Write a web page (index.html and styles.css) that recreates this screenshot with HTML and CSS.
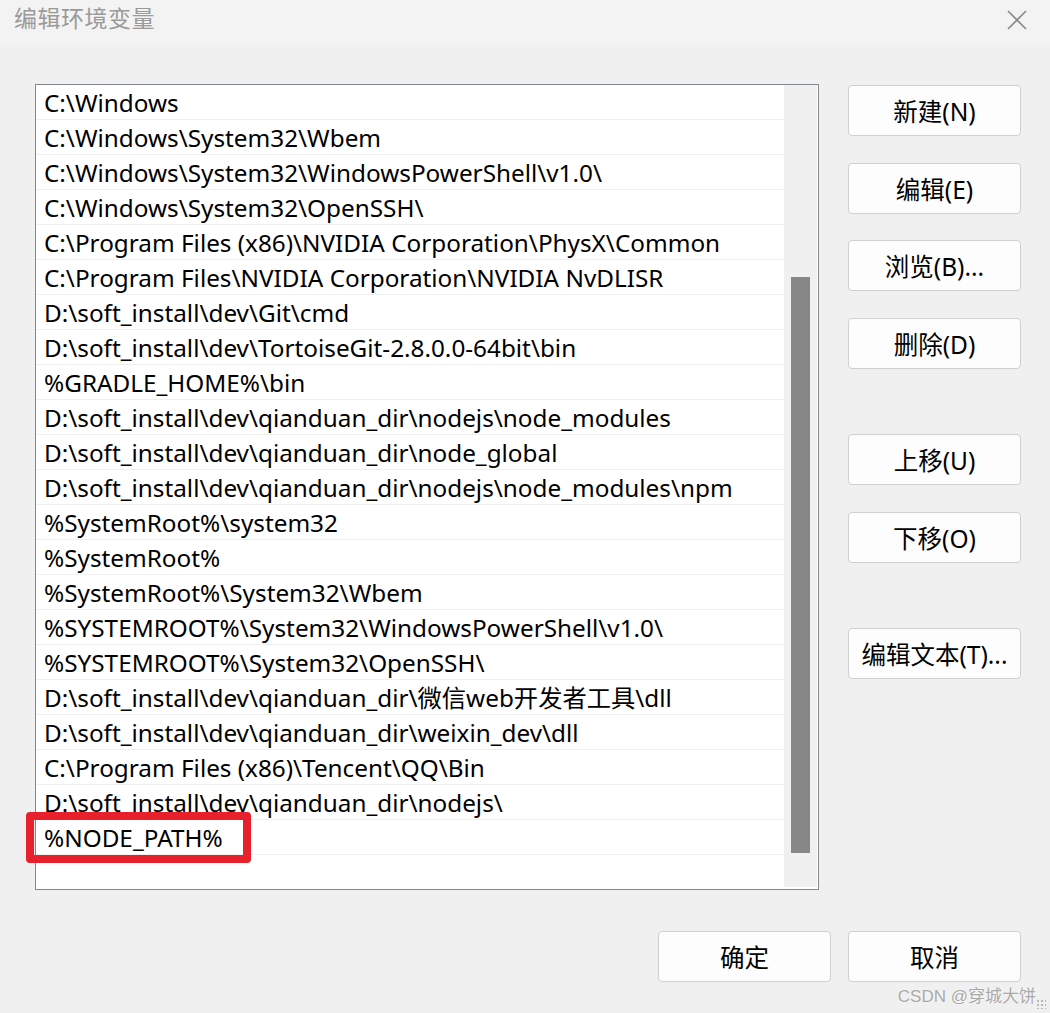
FILE: index.html
```html
<!DOCTYPE html>
<html lang="zh-CN">
<head>
    <meta charset="UTF-8">
    <title>编辑环境变量</title>
    <link rel="stylesheet" href="styles.css">
</head>
<body>
    <div class="dialog">
        <div class="title-bar">
            <span class="title">编辑环境变量</span>
            <svg class="close" width="20" height="20" viewBox="0 0 20 20">
                <path d="M1 1 L19 19 M19 1 L1 19" stroke="#8a8a8a" stroke-width="1.6" fill="none"/>
            </svg>
        </div>

        <div class="main">
            <div class="list-box">
                <div class="rows">
                    <div class="row">C:\Windows</div>
                    <div class="row">C:\Windows\System32\Wbem</div>
                    <div class="row">C:\Windows\System32\WindowsPowerShell\v1.0\</div>
                    <div class="row">C:\Windows\System32\OpenSSH\</div>
                    <div class="row">C:\Program Files (x86)\NVIDIA Corporation\PhysX\Common</div>
                    <div class="row">C:\Program Files\NVIDIA Corporation\NVIDIA NvDLISR</div>
                    <div class="row">D:\soft_install\dev\Git\cmd</div>
                    <div class="row">D:\soft_install\dev\TortoiseGit-2.8.0.0-64bit\bin</div>
                    <div class="row">%GRADLE_HOME%\bin</div>
                    <div class="row">D:\soft_install\dev\qianduan_dir\nodejs\node_modules</div>
                    <div class="row">D:\soft_install\dev\qianduan_dir\node_global</div>
                    <div class="row">D:\soft_install\dev\qianduan_dir\nodejs\node_modules\npm</div>
                    <div class="row">%SystemRoot%\system32</div>
                    <div class="row">%SystemRoot%</div>
                    <div class="row">%SystemRoot%\System32\Wbem</div>
                    <div class="row">%SYSTEMROOT%\System32\WindowsPowerShell\v1.0\</div>
                    <div class="row">%SYSTEMROOT%\System32\OpenSSH\</div>
                    <div class="row">D:\soft_install\dev\qianduan_dir\微信web开发者工具\dll</div>
                    <div class="row">D:\soft_install\dev\qianduan_dir\weixin_dev\dll</div>
                    <div class="row">C:\Program Files (x86)\Tencent\QQ\Bin</div>
                    <div class="row">D:\soft_install\dev\qianduan_dir\nodejs\</div>
                    <div class="row marked">%NODE_PATH%<span class="highlight"></span></div>
                </div>
                <div class="scrollbar">
                    <div class="thumb"></div>
                </div>
            </div>

            <div class="side">
                <div class="btn-group">
                    <button class="btn">新建(N)</button>
                    <button class="btn">编辑(E)</button>
                    <button class="btn">浏览(B)...</button>
                    <button class="btn">删除(D)</button>
                </div>
                <div class="btn-group">
                    <button class="btn">上移(U)</button>
                    <button class="btn">下移(O)</button>
                </div>
                <div class="btn-group">
                    <button class="btn">编辑文本(T)...</button>
                </div>
            </div>
        </div>

        <div class="footer">
            <button class="btn">确定</button>
            <button class="btn">取消</button>
        </div>

        <div class="watermark">CSDN @穿城大饼</div>
        <div class="grip"></div>
    </div>
</body>
</html>
```

FILE: styles.css
```css
/* Dialog frame */
body {
    margin: 0;
    padding: 0;
    background: #f0f0f0;
    font-family: 'Noto Sans', 'Noto Sans CJK SC', sans-serif;
}

.dialog {
    position: relative;
    width: 1050px;
    height: 1013px;
    background: #f0f0f0;
    overflow: hidden;
}

.title-bar {
    height: 45px;
    background: #f3f3f3;
    display: flex;
    align-items: center;
    justify-content: space-between;
    padding: 0 23px 11px 14px;
    box-sizing: border-box;
}

.title {
    font-family: 'Noto Sans CJK SC', sans-serif;
    font-size: 23px;
    color: #9a9a9a;
    letter-spacing: 0.5px;
}

.close {
    margin-top: 5px;
}

/* Main area */
.main {
    display: flex;
    padding: 39px 0 0 35px;
}

.list-box {
    width: 784px;
    height: 806px;
    box-sizing: border-box;
    border: 1px solid #838790;
    background: #fff;
    display: flex;
}

.rows {
    width: 748px;
}

.row {
    position: relative;
    height: 35px;
    line-height: 36px;
    padding-left: 8px;
    border-bottom: 1px solid #efefef;
    box-sizing: border-box;
    font-size: 24.3px;
    color: #000;
    white-space: nowrap;
}

.highlight {
    position: absolute;
    left: -10px;
    top: -8px;
    width: 209px;
    height: 35px;
    border: 8px solid #e8202c;
    border-radius: 4px;
}

.scrollbar {
    width: 33px;
    height: 802px;
    background: #f0f0f0;
    padding-top: 192px;
    box-sizing: border-box;
}

.thumb {
    width: 19px;
    height: 576px;
    margin-left: 7px;
    background: #878787;
}

/* Buttons */
.side {
    display: flex;
    flex-direction: column;
    gap: 65px;
    margin-left: 29px;
    margin-top: 1px;
}

.btn-group {
    display: flex;
    flex-direction: column;
    gap: 26.7px;
}

.btn {
    width: 173px;
    height: 51px;
    background: #fdfdfd;
    border: 1px solid #d0d0d0;
    border-radius: 4px;
    font-family: 'Noto Sans', 'Noto Sans CJK SC', sans-serif;
    font-size: 24.5px;
    color: #000;
    padding: 0;
}

.footer {
    display: flex;
    justify-content: flex-end;
    gap: 17px;
    padding: 41px 29px 0 0;
}

/* Watermark */
.watermark {
    position: absolute;
    right: 14px;
    bottom: 6px;
    font-family: 'Liberation Sans', 'Noto Sans CJK SC', sans-serif;
    font-size: 17px;
    color: #a9a9a9;
    text-shadow: 0 0 2px #fff;
}

.grip {
    position: absolute;
    right: 4px;
    bottom: 4px;
    width: 10px;
    height: 10px;
    background-image: radial-gradient(#b8b8b8 1px, transparent 1.5px);
    background-size: 4px 4px;
}
```
